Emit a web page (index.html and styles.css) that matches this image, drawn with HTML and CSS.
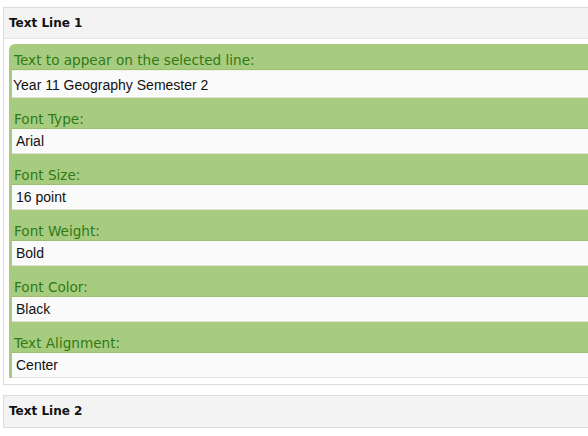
FILE: index.html
```html
<!DOCTYPE html>
<html>
<head>
<meta charset="utf-8">
<link rel="stylesheet" href="styles.css">
</head>
<body>
<div class="box">
  <div class="box-head">Text Line 1</div>
  <div class="box-body">
    <div class="panel">
      <div class="label first">Text to appear on the selected line:</div>
      <div class="value input">Year 11 Geography Semester 2</div>
      <div class="label">Font Type:</div>
      <div class="value">Arial</div>
      <div class="label">Font Size:</div>
      <div class="value">16 point</div>
      <div class="label">Font Weight:</div>
      <div class="value">Bold</div>
      <div class="label">Font Color:</div>
      <div class="value">Black</div>
      <div class="label">Text Alignment:</div>
      <div class="value">Center</div>
    </div>
  </div>
</div>
<div class="box second">
  <div class="box-head">Text Line 2</div>
</div>
</body>
</html>
```
FILE: styles.css
```css
html, body {
  margin: 0;
  background: #ffffff;
  overflow: hidden;
}
body {
  padding: 7px 0 0 3px;
}
.box {
  border: 1px solid #dcdcdc;
  border-right: none;
  margin-right: 0;
  background: #ffffff;
}
.box.second {
  margin-top: 10px;
}
.box-head {
  height: 31px;
  background: #f3f3f3;
  border-bottom: 1px solid #e6e6e6;
  box-sizing: border-box;
  padding-left: 5px;
  font-family: "DejaVu Sans", Verdana, sans-serif;
  font-weight: bold;
  font-size: 12px;
  line-height: 30px;
  color: #111111;
}
.box.second .box-head {
  height: 32px;
  line-height: 31px;
  border-bottom: 1px solid #dcdcdc;
}
.box.second {
  border-bottom: none;
}
.box-body {
  padding: 5px 0 6px 5px;
}
.panel {
  background: #a8cc7f;
  border-top-left-radius: 6px;
  padding-left: 3px;
}
.label {
  height: 31px;
  box-sizing: border-box;
  padding: 13px 0 0 2px;
  font-family: "DejaVu Sans", Verdana, sans-serif;
  font-size: 13.6px;
  line-height: 17px;
  color: #2f7a14;
  border-bottom: 1px solid #9cbf74;
}
.label.first {
  height: 26px;
  padding-top: 8px;
}
.value {
  height: 25px;
  box-sizing: border-box;
  background: #fafafa;
  padding: 1px 0 0 4px;
  font-family: "Liberation Sans", Arial, sans-serif;
  font-size: 14px;
  line-height: 23px;
  color: #111111;
  border-bottom: 1px solid #e2e2e2;
}
.value.input {
  height: 28px;
  line-height: 26px;
  padding-left: 1px;
  border-top: 1px solid #eef5e6;
}
```
